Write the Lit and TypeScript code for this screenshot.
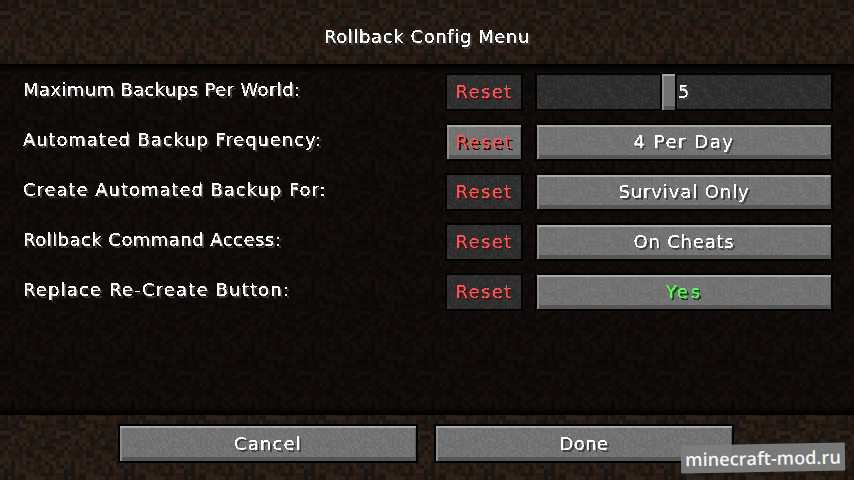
import { LitElement, html, css } from "lit";
import { customElement } from "lit/decorators.js";

function rng(seed: number) {
  let s = seed;
  return () => {
    s = (s * 1664525 + 1013904223) >>> 0;
    return s / 4294967296;
  };
}

function dirtTile(): string {
  const r = rng(7);
  const cols = ["#241a13", "#271c15", "#2c2018", "#1f1610", "#1b140f", "#2f2319", "#241a13", "#19140f", "#212324"];
  let rects = "";
  for (let y = 0; y < 16; y++) {
    for (let x = 0; x < 16; x++) {
      const v = r();
      const i = v > 0.95 ? 8 : Math.floor(r() * 8);
      rects += `<rect x='${x}' y='${y}' width='1' height='1' fill='${cols[i]}'/>`;
    }
  }
  const svg = `<svg xmlns='http://www.w3.org/2000/svg' viewBox='0 0 16 16' width='60' height='60' shape-rendering='crispEdges'>${rects}</svg>`;
  return `url("data:image/svg+xml,${encodeURIComponent(svg)}")`;
}

function stoneTile(): string {
  const r = rng(23);
  let rects = "";
  for (let y = 0; y < 24; y++) {
    for (let x = 0; x < 48; x++) {
      const v = r();
      if (v > 0.45) {
        const c = r() > 0.5 ? "#fff" : "#000";
        rects += `<rect x='${x}' y='${y}' width='1' height='1' fill='${c}' opacity='0.04'/>`;
      }
    }
  }
  const svg = `<svg xmlns='http://www.w3.org/2000/svg' viewBox='0 0 48 24' width='96' height='48'>${rects}</svg>`;
  return `url("data:image/svg+xml,${encodeURIComponent(svg)}")`;
}

const DIRT = dirtTile();
const STONE = stoneTile();

interface Row {
  label: string;
  value: string;
  kind: "slider" | "button" | "green";
  resetActive?: boolean;
  ls: number;
  vls: number;
}

const ROWS: Row[] = [
  { label: "Maximum Backups Per World:", value: "5", kind: "slider", ls: 0.38, vls: 0 },
  { label: "Automated Backup Frequency:", value: "4 Per Day", kind: "button", resetActive: true, ls: 0.89, vls: 1.55 },
  { label: "Create Automated Backup For:", value: "Survival Only", kind: "button", ls: 0.96, vls: 0.9 },
  { label: "Rollback Command Access:", value: "On Cheats", kind: "button", ls: 0.46, vls: 0.8 },
  { label: "Replace Re-Create Button:", value: "Yes", kind: "green", ls: 1.16, vls: 2.5 },
];

@customElement("app-root")
export class AppRoot extends LitElement {
  static styles = css`
    :host {
      display: block;
      width: 854px;
      height: 480px;
      overflow: hidden;
      position: relative;
    }
    .defs {
      position: absolute;
      width: 0;
      height: 0;
    }
    .screen {
      width: 854px;
      height: 480px;
      display: flex;
      flex-direction: column;
      background-size: 60px 60px;
      font-family: "DejaVu Sans", sans-serif;
      font-size: 18px;
      color: #fff;
    }
    .t {
      display: inline-block;
      white-space: nowrap;
      letter-spacing: 1.1px;
      -webkit-text-stroke: 0.12px currentColor;
      text-shadow: 2px 2px 0 #3f3f3f;
      filter: url(#crisp);
    }
    .header {
      height: 64px;
      flex: none;
      display: flex;
      justify-content: center;
      align-items: center;
      padding-top: 9px;
      box-sizing: border-box;
    }
    .header .t {
      letter-spacing: 0.6px;
    }
    .list {
      flex: 1;
      display: flex;
      flex-direction: column;
      gap: 12px;
      padding: 9px 21px 0 23px;
      box-sizing: border-box;
      background:
        linear-gradient(#000 0, rgba(0, 0, 0, 0) 9px),
        linear-gradient(0deg, #000 0, rgba(0, 0, 0, 0) 9px),
        rgba(0, 0, 0, 0.55);
    }
    .row {
      height: 38px;
      display: flex;
      align-items: flex-start;
    }
    .label {
      flex: 1;
      padding-top: 6px;
    }
    .btn {
      box-sizing: border-box;
      height: 38px;
      border: 2px solid #000;
      display: flex;
      align-items: center;
      justify-content: center;
      padding-bottom: 2px;
      position: relative;
      background-color: #727272;
      background-size: 96px 48px;
      box-shadow: inset 0 2px 0 #a8a8a8, inset 2px 0 0 #8e8e8e, inset 0 -4px 0 #565656, inset -1px 0 0 #5a5a5a;
    }
    .off {
      background-color: #2d2d2d;
      box-shadow: none;
      padding-bottom: 2px;
    }
    .reset {
      width: 78px;
      margin-right: 12px;
      flex: none;
    }
    .reset .t {
      letter-spacing: 1.3px;
    }
    .wide {
      width: 298px;
      flex: none;
    }
    .red {
      color: #ff5555;
      text-shadow: 2px 2px 0 #3f1515;
    }
    .active-red {
      text-shadow: 2px 2px 0 #2a0a0a;
    }
    .green {
      color: #55ff55;
      text-shadow: 2px 2px 0 #153f15;
    }
    .thumb {
      position: absolute;
      left: 123px;
      top: -1px;
      width: 17px;
      height: 36px;
      box-sizing: border-box;
      border-left: 2px solid #000;
      border-right: 2px solid #000;
      background: #727272;
      box-shadow: inset 0 2px 0 #a8a8a8, inset 2px 0 0 #8e8e8e, inset 0 -4px 0 #565656;
    }
    .footer {
      height: 65px;
      flex: none;
      display: flex;
      justify-content: flex-start;
      gap: 16px;
      padding: 9px 0 0 118px;
      box-sizing: border-box;
    }
    .footer .btn {
      width: 300px;
      height: 39px;
      padding-bottom: 0;
    }
    .mark {
      position: absolute;
      left: 681px;
      top: 444px;
      width: 164px;
      height: 28px;
      box-sizing: border-box;
      display: flex;
      align-items: center;
      justify-content: center;
      background: rgba(125, 125, 125, 0.95);
      color: #f4f4f4;
      font-family: "Open Sans", sans-serif;
      font-weight: 600;
      font-size: 18.2px;
      transform: rotate(-1deg);
    }
  `;

  render() {
    return html`
      <svg class="defs" aria-hidden="true">
        <filter id="crisp" x="-5%" y="-20%" width="110%" height="140%" color-interpolation-filters="sRGB">
          <feComponentTransfer>
            <feFuncA type="discrete" tableValues="0 1"></feFuncA>
          </feComponentTransfer>
          <feGaussianBlur stdDeviation="0.35"></feGaussianBlur>
        </filter>
      </svg>
      <div class="screen" style="background-image:${DIRT}">
        <div class="header"><span class="t">Rollback Config Menu</span></div>
        <div class="list">
          ${ROWS.map(
            (r) => html`
              <div class="row">
                <div class="label"><span class="t" style="letter-spacing:${r.ls}px">${r.label}</span></div>
                <div
                  class="btn reset ${r.resetActive ? "" : "off"}"
                  style="background-image:${STONE}"
                >
                  <span class="t red ${r.resetActive ? "active-red" : ""}">Reset</span>
                </div>
                ${r.kind === "slider"
                  ? html`<div class="btn wide off" style="background-image:${STONE}">
                      <div class="thumb"></div>
                      <span class="t">${r.value}</span>
                    </div>`
                  : html`<div class="btn wide" style="background-image:${STONE}">
                      <span class="t ${r.kind === "green" ? "green" : ""}" style="letter-spacing:${r.vls}px">${r.value}</span>
                    </div>`}
              </div>
            `
          )}
        </div>
        <div class="footer">
          <div class="btn" style="background-image:${STONE}"><span class="t" style="letter-spacing:1.15px">Cancel</span></div>
          <div class="btn" style="background-image:${STONE}"><span class="t" style="letter-spacing:0.4px">Done</span></div>
        </div>
      </div>
      <div class="mark">minecraft-mod.ru</div>
    `;
  }
}
